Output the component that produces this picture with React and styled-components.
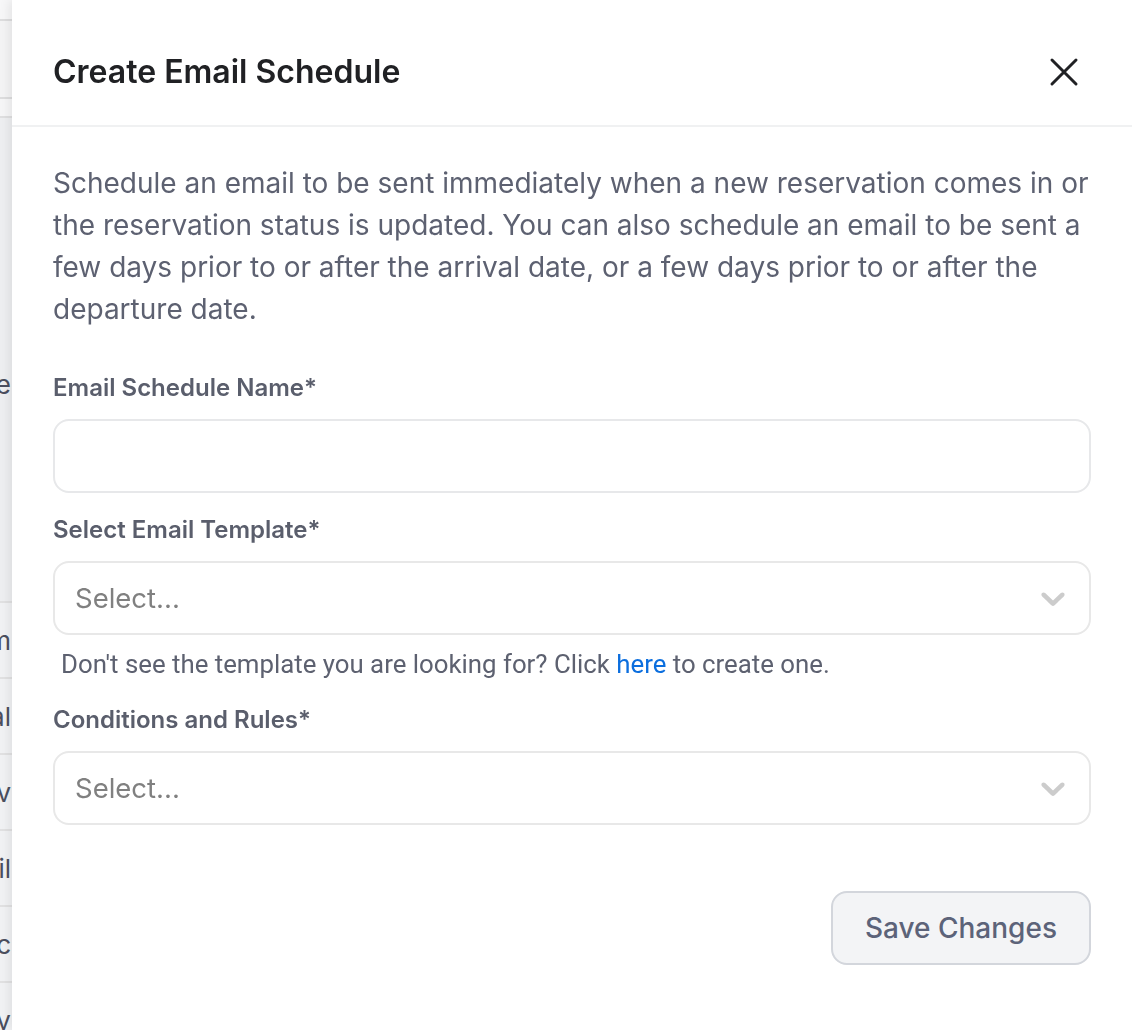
import React from 'react';
import styled, { createGlobalStyle } from 'styled-components';

const GlobalStyle = createGlobalStyle`
  * { box-sizing: border-box; }
  html, body { margin: 0; padding: 0; }
  body {
    font-family: Inter, "Noto Sans", sans-serif;
    background: #ffffff;
    -webkit-font-smoothing: antialiased;
  }
`;

/* page that sits behind the drawer */

const Page = styled.div`
  min-height: 1030px;
  background: #ffffff;
  display: flex;
  flex-direction: column;
`;

const TopBar = styled.div`
  height: 21px;
  background: #fcfcfc;
  border-bottom: 2px solid #e2e2e2;
`;

const Toolbar = styled.div`
  height: 78px;
  background: #f9f9f9;
  border-bottom: 2px solid #e2e2e2;
`;

const Spacer = styled.div`
  height: 19px;
  background: #fbfbfb;
  border-bottom: 2px solid #e4e4e4;
`;

const Panel = styled.div`
  height: 485px;
  background: #f3f4f5;
  border-bottom: 2px solid #e6e6e6;
  display: flex;
  align-items: center;
`;

const Row = styled.div`
  height: 76px;
  background: #f6f7f8;
  border-bottom: 2px solid #e6e6e6;
  display: flex;
  align-items: center;
`;

const Cell = styled.div`
  width: 11px;
  overflow: hidden;
  display: flex;
  justify-content: flex-end;
  white-space: nowrap;
  font-size: 26px;
  color: #4d5160;
  margin-top: ${(p) => p.$shift || 0}px;
`;

/* drawer */

const Overlay = styled.div`
  position: fixed;
  inset: 0;
  background: rgba(20, 24, 30, 0.02);
`;

const Drawer = styled.aside`
  position: fixed;
  top: 0;
  right: 0;
  bottom: 0;
  left: 12px;
  background: #ffffff;
  box-shadow: -3px 0 10px rgba(0, 0, 0, 0.08);
  display: flex;
  flex-direction: column;
`;

const Header = styled.header`
  height: 127px;
  padding: 52px 52px 33px 41px;
  border-bottom: 2px solid #f0f1f2;
  display: flex;
  align-items: center;
  justify-content: space-between;
`;

const Title = styled.h2`
  margin: 0;
  font-size: 32px;
  line-height: 40px;
  font-weight: 600;
  color: #202124;
`;

const CloseButton = styled.button`
  width: 32px;
  height: 32px;
  padding: 0;
  border: none;
  background: none;
  display: flex;
  align-items: center;
  justify-content: center;
  cursor: pointer;
`;

const Body = styled.div`
  padding: 35px 41px 40px;
  display: flex;
  flex-direction: column;
`;

const Description = styled.p`
  margin: 0 0 42px;
  font-size: 28px;
  line-height: 42px;
  color: #5d6171;
`;

const Field = styled.div`
  display: flex;
  flex-direction: column;
  margin-top: ${(p) => p.$gap || 0}px;
`;

const Label = styled.label`
  font-size: 24px;
  line-height: 32px;
  font-weight: 600;
  color: #5a5e6c;
  margin-bottom: 15px;
`;

const TextInput = styled.input`
  height: 74px;
  width: 100%;
  border: 2px solid #e7e8ea;
  border-radius: 16px;
  padding: 0 20px;
  font: inherit;
  font-size: 27px;
  outline: none;
  background: #ffffff;
`;

const SelectBox = styled.div`
  height: 74px;
  border: 2px solid #e8e8e8;
  border-radius: 16px;
  background: #ffffff;
  display: flex;
  align-items: center;
  justify-content: space-between;
  padding: 0 16px 0 20px;
`;

const Placeholder = styled.span`
  font-size: 27.5px;
  color: #808080;
`;

const Hint = styled.p`
  margin: 13px 0 0 8px;
  font-family: Roboto, "Liberation Sans", sans-serif;
  font-size: 25.8px;
  line-height: 32px;
  color: #5d6170;
`;

const Link = styled.a`
  color: #0b6ede;
  text-decoration: none;
`;

const Footer = styled.div`
  display: flex;
  justify-content: flex-end;
  margin-top: 66px;
`;

const SaveButton = styled.button`
  height: 74px;
  padding: 0 32px;
  border: 2px solid #d3d6dc;
  border-radius: 16px;
  background: #f3f4f6;
  font-family: Inter, "Noto Sans", sans-serif;
  font-size: 28px;
  font-weight: 500;
  color: #5c6379;
  cursor: pointer;
`;

function Chevron() {
  return (
    <svg width="40" height="40" viewBox="0 0 20 20" aria-hidden="true">
      <path
        fill="#cccccc"
        d="M4.516 7.548c0.436-0.446 1.043-0.481 1.576 0l3.908 3.747 3.908-3.747c0.533-0.481 1.141-0.446 1.574 0 0.436 0.445 0.408 1.197 0 1.615-0.406 0.418-4.695 4.502-4.695 4.502-0.217 0.223-0.502 0.335-0.787 0.335s-0.57-0.112-0.789-0.335c0 0-4.287-4.084-4.695-4.502s-0.436-1.17 0-1.615z"
      />
    </svg>
  );
}

function Select() {
  return (
    <SelectBox>
      <Placeholder>Select...</Placeholder>
      <Chevron />
    </SelectBox>
  );
}

const rows = ['Room', 'Total', 'Rev', 'Email', 'Arc', 'Day'];

export default function App() {
  return (
    <>
      <GlobalStyle />
      <Page>
        <TopBar />
        <Toolbar />
        <Spacer />
        <Panel>
          <Cell $shift={50}>Are</Cell>
        </Panel>
        {rows.map((r) => (
          <Row key={r}>
            <Cell>{r}</Cell>
          </Row>
        ))}
      </Page>
      <Overlay />
      <Drawer>
        <Header>
          <Title>Create Email Schedule</Title>
          <CloseButton aria-label="Close">
            <svg width="30" height="30" viewBox="0 0 30 30">
              <path
                d="M3 3L27 27M27 3L3 27"
                stroke="#202124"
                strokeWidth="3"
                strokeLinecap="round"
              />
            </svg>
          </CloseButton>
        </Header>
        <Body>
          <Description>
            Schedule an email to be sent immediately when a new reservation comes in or
            the reservation status is updated. You can also schedule an email to be sent a
            few days prior to or after the arrival date, or a few days prior to or after the
            departure date.
          </Description>
          <Field>
            <Label>Email Schedule Name*</Label>
            <TextInput type="text" />
          </Field>
          <Field $gap={21}>
            <Label>Select Email Template*</Label>
            <Select />
            <Hint>
              Don't see the template you are looking for? Click <Link href="#">here</Link> to
              create one.
            </Hint>
          </Field>
          <Field $gap={24}>
            <Label>Conditions and Rules*</Label>
            <Select />
          </Field>
          <Footer>
            <SaveButton>Save Changes</SaveButton>
          </Footer>
        </Body>
      </Drawer>
    </>
  );
}
